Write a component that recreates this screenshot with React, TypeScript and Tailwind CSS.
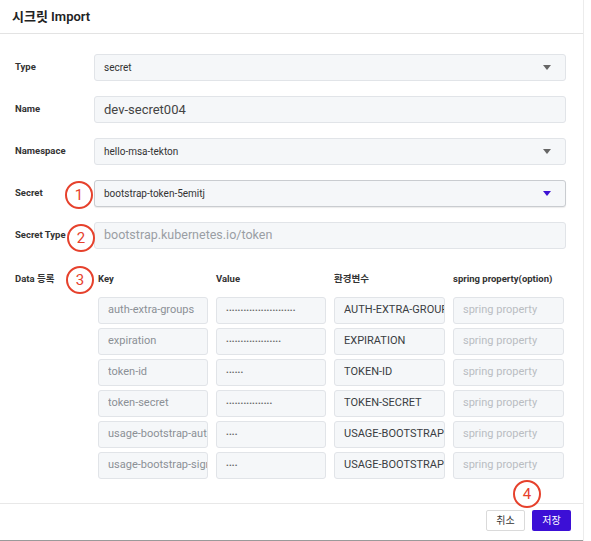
const font = "font-['Roboto','Noto_Sans_CJK_KR',sans-serif]";

type Row = { key: string; dots: number; env: string };

const rows: Row[] = [
  { key: 'auth-extra-groups', dots: 24, env: 'AUTH-EXTRA-GROUPS' },
  { key: 'expiration', dots: 19, env: 'EXPIRATION' },
  { key: 'token-id', dots: 6, env: 'TOKEN-ID' },
  { key: 'token-secret', dots: 16, env: 'TOKEN-SECRET' },
  { key: 'usage-bootstrap-authentication', dots: 4, env: 'USAGE-BOOTSTRAP-AUTHENTICATION' },
  { key: 'usage-bootstrap-signing', dots: 4, env: 'USAGE-BOOTSTRAP-SIGNING' },
];

function Caret({ active }: { active?: boolean }) {
  return (
    <svg width="8" height="5" viewBox="0 0 8 5" className="ml-auto mr-[14px] shrink-0">
      <path d="M0 0h8L4 5z" fill={active ? '#3d12d4' : '#666'} />
    </svg>
  );
}

function Field({
  label,
  children,
  select,
  active,
}: {
  label: string;
  children: React.ReactNode;
  select?: boolean;
  active?: boolean;
}) {
  return (
    <div className="flex items-center">
      <div className="w-[94px] shrink-0 pl-[15px] text-[9.5px] font-bold text-[#333]">{label}</div>
      <div
        className={`flex h-[27px] flex-1 items-center overflow-hidden rounded-[3px] border bg-[#f5f7f9] pl-[9px] ${
          active ? 'border-[#c9ccd0] shadow-[0_1px_1px_rgba(0,0,0,0.08)]' : 'border-[#e1e4e8]'
        }`}
      >
        {children}
        {select && <Caret active={active} />}
      </div>
    </div>
  );
}

function Cell({ children, className = '' }: { children: React.ReactNode; className?: string }) {
  return (
    <div
      className={`flex h-[27px] min-w-0 items-center overflow-hidden whitespace-nowrap rounded-[3px] border border-[#e1e4e8] bg-[#f5f7f9] pl-[9px] text-[11px] ${className}`}
    >
      <span className="block min-w-0 overflow-hidden pr-[6px]">{children}</span>
    </div>
  );
}

function Mark({ n, className }: { n: number; className: string }) {
  return (
    <div
      className={`absolute flex h-[28px] w-[28px] items-center justify-center rounded-full border-2 border-[#e6412c] bg-white text-[15px] text-[#e6412c] ${className}`}
    >
      {n}
    </div>
  );
}

export default function App() {
  return (
    <div className={`relative h-[541px] w-[591px] bg-white ${font}`}>
      <div className="flex h-[541px] w-[584px] flex-col border-r border-[#ececec]">
        <div className="flex h-[34px] items-center border-b border-[#e3e3e3] pl-[12px] text-[13px] font-semibold text-[#222]">
          시크릿 Import
        </div>

        <div className="flex flex-col gap-[15px] pr-[17px] pt-[20px]">
          <Field label="Type" select>
            <span className="text-[10px] text-[#333]">secret</span>
          </Field>
          <Field label="Name">
            <span className="text-[13px] text-[#444]">dev-secret004</span>
          </Field>
          <Field label="Namespace" select>
            <span className="text-[10px] text-[#333]">hello-msa-tekton</span>
          </Field>
          <Field label="Secret" select active>
            <span className="text-[10px] text-[#333]">bootstrap-token-5emitj</span>
          </Field>
          <Field label="Secret Type">
            <span className="text-[12.5px] text-[#9a9ea4]">bootstrap.kubernetes.io/token</span>
          </Field>
        </div>

        <div className="mt-[21px] flex">
          <div className="flex h-[18px] w-[98px] shrink-0 items-center pl-[15px] text-[9.5px] font-bold text-[#333]">
            Data 등록
          </div>
          <div className="grid grid-cols-[110px_110px_111px_111px] gap-x-[8px] gap-y-[4px]">
            <div className="mb-[5px] flex h-[18px] items-center text-[9.5px] font-bold text-[#333]">Key</div>
            <div className="mb-[5px] flex h-[18px] items-center text-[9.5px] font-bold text-[#333]">Value</div>
            <div className="mb-[5px] flex h-[18px] items-center text-[9.5px] font-bold text-[#333]">환경변수</div>
            <div className="mb-[5px] flex h-[18px] items-center text-[9.5px] font-bold text-[#333]">
              spring property(option)
            </div>
            {rows.map((r) => (
              <div key={r.key} className="contents">
                <Cell className="text-[#8b9096]">{r.key}</Cell>
                <Cell className="text-[#666]">
                  <span className="text-[8px] tracking-[0.2px]">{'•'.repeat(r.dots)}</span>
                </Cell>
                <Cell className="text-[#3a3d42]">{r.env}</Cell>
                <Cell className="text-[#b9bdc2]">spring property</Cell>
              </div>
            ))}
          </div>
        </div>

        <div className="mt-auto flex h-[37px] items-start justify-end gap-[7px] border-t border-[#e8e8e8] pr-[12px] pt-[6px]">
          <button className="h-[21px] w-[39px] rounded-[2px] border border-[#dadada] bg-white text-[10px] text-[#333]">
            취소
          </button>
          <button className="h-[21px] w-[39px] rounded-[2px] bg-[#3c0fd6] text-[10px] text-white">저장</button>
        </div>
        <div className="h-[1px] bg-[#9a9a9a]" />
      </div>

      <Mark n={1} className="left-[65px] top-[181px]" />
      <Mark n={2} className="left-[67px] top-[224px]" />
      <Mark n={3} className="left-[66px] top-[266px]" />
      <Mark n={4} className="left-[513px] top-[480px]" />
    </div>
  );
}
